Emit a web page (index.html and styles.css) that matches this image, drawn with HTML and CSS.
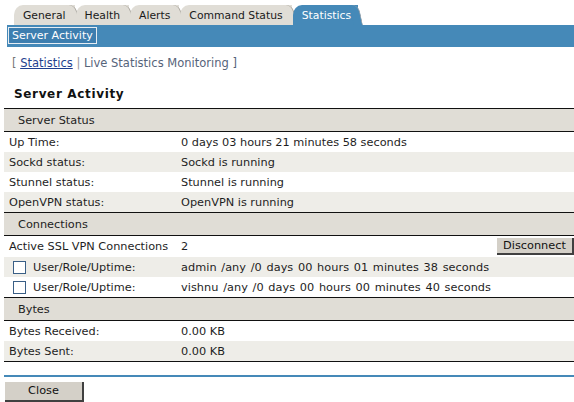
FILE: index.html
```html
<!DOCTYPE html>
<html>
<head>
<meta charset="utf-8">
<link rel="stylesheet" href="styles.css">
</head>
<body>
<div class="tabs">
  <div class="tab">General</div>
  <div class="tab">Health</div>
  <div class="tab">Alerts</div>
  <div class="tab">Command Status</div>
  <div class="tab active">Statistics</div>
</div>
<div class="bar"><span class="subtab">Server Activity</span></div>
<div class="links"><span class="br">[</span> <a class="link" href="#">Statistics</a> <span class="sep">|</span> <span class="live">Live Statistics Monitoring ]</span></div>
<h1 class="title">Server Activity</h1>
<div class="table">
  <div class="head">Server Status</div>
  <div class="row"><div class="lbl">Up Time:</div><div class="val">0 days 03 hours 21 minutes 58 seconds</div></div>
  <div class="row alt"><div class="lbl">Sockd status:</div><div class="val">Sockd is running</div></div>
  <div class="row"><div class="lbl">Stunnel status:</div><div class="val">Stunnel is running</div></div>
  <div class="row alt"><div class="lbl">OpenVPN status:</div><div class="val">OpenVPN is running</div></div>
  <div class="head">Connections</div>
  <div class="row act"><div class="lbl">Active SSL VPN Connections</div><div class="val">2</div><button class="btn disc">Disconnect</button></div>
  <div class="row alt"><div class="lbl chk"><span class="box"></span>User/Role/Uptime:</div><div class="val user">admin /any /0 days 00 hours 01 minutes 38 seconds</div></div>
  <div class="row"><div class="lbl chk"><span class="box"></span>User/Role/Uptime:</div><div class="val user">vishnu /any /0 days 00 hours 00 minutes 40 seconds</div></div>
  <div class="head">Bytes</div>
  <div class="row"><div class="lbl">Bytes Received:</div><div class="val">0.00 KB</div></div>
  <div class="row alt last"><div class="lbl">Bytes Sent:</div><div class="val">0.00 KB</div></div>
</div>
<div class="rule"></div>
<button class="btn close">Close</button>
</body>
</html>
```
FILE: styles.css
```css
html, body { margin: 0; padding: 0; background: #fff; }
body { font-family: "DejaVu Sans", Verdana, sans-serif; font-size: 11.3px; color: #1e1e1e; width: 574px; overflow: hidden; }

.tabs { display: flex; padding-left: 14px; margin-top: 5px; height: 20px; }
.tab { position: relative; height: 20px; line-height: 21px; padding: 0 9px 0 9px; margin-right: 1px; background: #e0ddd6; border-top-left-radius: 9px 10px; font-size: 10.8px; color: #1a1a1a; }
.tab::after { content: ""; position: absolute; top: 0; right: -5px; width: 8px; height: 20px; background: #e0ddd6; border-right: 1px solid #a29e96; border-top-right-radius: 7px; transform: skewX(12deg); transform-origin: bottom; }
.tab.active { background: #4589b8; color: #fff; padding-right: 7px; }
.tab.active::after { background: #4589b8; border-right-color: #9aa3aa; }

.bar { margin-left: 7px; height: 22px; background: #4589b8; padding: 2px 0 0 1px; box-sizing: border-box; }
.subtab { display: inline-block; border: 1px solid #e6edf3; background: #3d7eaf; color: #fff; height: 15px; line-height: 15px; padding: 0 3px; font-size: 11px; }

.links { margin: 9px 0 0 12px; line-height: 14px; color: #5c6a7c; font-size: 11.5px; }
.br { color: #777; }
.link { color: #1f3f8f; text-decoration: underline; }
.sep { color: #999; }
.live { color: #56647a; }

.title { margin: 16px 0 0 14px; font-size: 12px; font-weight: bold; letter-spacing: 0.65px; line-height: 16px; color: #111; }

.table { margin: 6px 0 0 4px; border-bottom: 1px solid #111; }
.head { background: #e0ddd6; border-top: 1px solid #111; border-bottom: 1px solid #111; height: 22px; line-height: 23px; padding-left: 14px; color: #222; }
.row { display: grid; grid-template-columns: 177px 1fr auto; height: 20px; line-height: 21px; background: #fff; align-items: center; }
.row.alt { background: #eeede8; }
.row.act { height: 21px; }
.lbl { padding-left: 5px; display: flex; align-items: center; }
.lbl.chk { padding-left: 9px; }
.val.user { word-spacing: 1px; letter-spacing: 0.05px; }
.box { width: 11px; height: 11px; border: 1px solid #3a5f86; background: #fff; margin-right: 7px; }

.btn { font-family: "DejaVu Sans", Verdana, sans-serif; font-size: 11.3px; color: #111; background: #d4d0c8; border: 0; border-right: 2px solid #404040; border-bottom: 2px solid #404040; padding: 0; margin: 0; }
.disc { width: 77px; height: 17px; line-height: 15px; align-self: center; }

.rule { height: 2px; background: #4589b8; margin: 13px 0 0 4px; }
.close { display: block; width: 79px; height: 20px; line-height: 18px; margin: 5px 0 0 5px; }
```
